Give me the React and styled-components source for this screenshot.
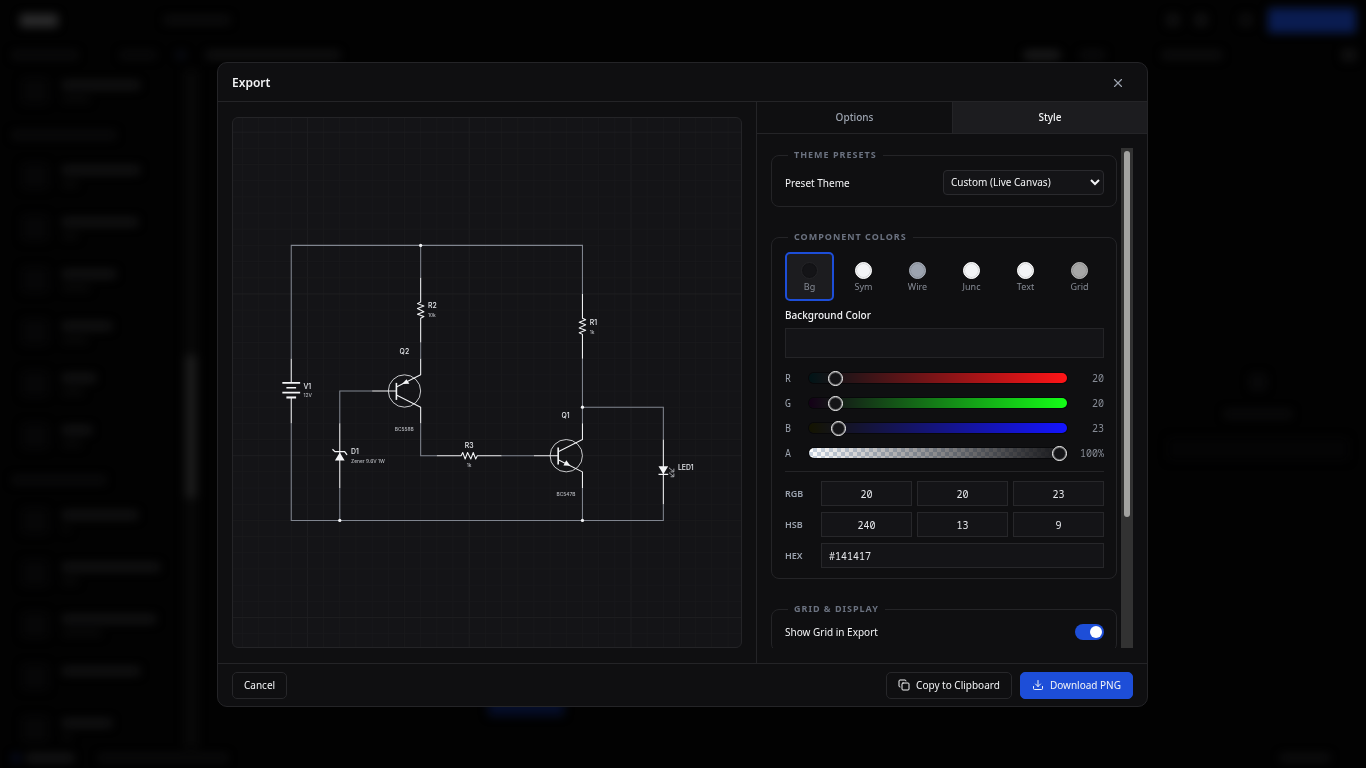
import React, { useState } from "react";
import styled, { createGlobalStyle, css } from "styled-components";
import { X, Copy, Download } from "lucide-react";

const Global = createGlobalStyle`
  *, *::before, *::after { box-sizing: border-box; }
  html, body, #root { height: 100%; }
  body {
    margin: 0;
    background: #020202;
    color: #f3f4f6;
    font: 10px/16px "Noto Sans", "Open Sans", sans-serif;
    overflow: hidden;
  }
  button, input, select { font: inherit; color: inherit; margin: 0; }
`;

const mono = css`font-family: "Noto Sans Mono", "DejaVu Sans Mono", monospace;`;

/* ---------- dimmed workspace behind the dialog ---------- */
const Workspace = styled.div`
  height: 100vh;
  display: flex;
  flex-direction: column;
  filter: blur(5px);
  overflow: hidden;
`;
const WorkRow = styled.div`
  display: flex;
  align-items: center;
  gap: ${(p) => p.$gap || 16}px;
  height: ${(p) => p.$h}px;
  padding: 0 10px 0 ${(p) => p.$left || 10}px;
  flex: none;
`;
const Spacer = styled.div`flex: 1;`;
const Smudge = styled.div`
  flex: none;
  width: ${(p) => p.$w}px;
  height: ${(p) => p.$h || 8}px;
  border-radius: 3px;
  background: ${(p) => p.$c || "#111112"};
`;
const WorkBody = styled.div`
  flex: 1;
  min-height: 0;
  display: flex;
  justify-content: space-between;
`;
const Library = styled.div`
  width: 184px;
  margin-top: -5px;
  overflow: hidden;
`;
const LibraryItem = styled.div`
  display: flex;
  align-items: center;
  gap: 14px;
  height: 52px;
  padding-left: 22px;
`;
const LibraryHead = styled.div`
  height: 33px;
  padding: 14px 12px 0;
`;
const LibraryText = styled.div`
  display: flex;
  flex-direction: column;
  gap: 7px;
`;
const LibraryScroll = styled.div`
  width: 14px;
  background: #080808;
  padding: 285px 2px 0;
`;
const CanvasArea = styled.div`
  flex: 1;
  display: flex;
  align-items: flex-end;
  padding: 0 0 32px 290px;
`;
const Inspector = styled.div`
  width: 216px;
  display: flex;
  flex-direction: column;
  align-items: center;
  justify-content: center;
  gap: 20px;
  padding-top: 16px;
`;

/* ---------- dialog ---------- */
const Overlay = styled.div`
  position: fixed;
  inset: 0;
  display: grid;
  place-items: center;
`;
const Dialog = styled.section`
  width: min(931px, calc(100vw - 32px));
  height: calc(100vh - 123px);
  margin: 1px 1px 0 0;
  display: flex;
  flex-direction: column;
  background: #0f0f11;
  border: 1px solid #242427;
  border-radius: 10px;
  overflow: hidden;
`;
const Header = styled.header`
  display: flex;
  align-items: center;
  justify-content: space-between;
  height: 39px;
  flex: none;
  padding: 1px 19px 0 14px;
  border-bottom: 1px solid #242427;
`;
const Title = styled.h2`
  margin: 0;
  font-size: 12px;
  font-weight: 600;
`;
const IconButton = styled.button`
  display: grid;
  place-items: center;
  width: 20px;
  height: 20px;
  padding: 0;
  border: 0;
  background: none;
  color: #9ca3af;
`;
const Body = styled.div`
  flex: 1;
  min-height: 0;
  display: grid;
  grid-template-columns: minmax(0, 1fr) 391px;
`;
const PreviewPane = styled.div`
  padding: 15px 14px;
  min-height: 0;
  display: flex;
`;
const Preview = styled.div`
  flex: 1;
  min-width: 0;
  border: 1px solid #242427;
  border-radius: 6px;
  background: #141417;
  overflow: hidden;
`;
const Side = styled.aside`
  min-height: 0;
  display: flex;
  flex-direction: column;
  border-left: 1px solid #242427;
`;
const Tabs = styled.div`
  display: grid;
  grid-template-columns: 1fr 1fr;
  height: 32px;
  flex: none;
  border-bottom: 1px solid #242427;
`;
const Tab = styled.button`
  border: 0;
  padding: 0 0 1px;
  font-weight: 500;
  background: ${(p) => (p.$active ? "#1c1c1f" : "transparent")};
  color: ${(p) => (p.$active ? "#f3f4f6" : "#9ca3af")};
  & + & { border-left: 1px solid #242427; }
`;
const ScrollArea = styled.div`
  flex: 1;
  min-height: 0;
  display: flex;
  gap: 4px;
  padding: 14px 14px 15px;
`;
const Settings = styled.div`
  flex: 1;
  min-width: 0;
  overflow-y: auto;
  scrollbar-width: none;
`;
const ScrollTrack = styled.div`
  width: 12px;
  padding: 3px;
  background: #323232;
`;
const ScrollThumb = styled.div`
  height: 74%;
  border-radius: 3px;
  background: #a3a3a1;
`;
const Group = styled.fieldset`
  min-width: 0;
  margin: 0 0 23px;
  padding: 8px 12px 11px 13px;
  border: 1px solid #242427;
  border-radius: 8px;
`;
const Legend = styled.legend`
  margin-left: 3px;
  padding: 0 6px;
  font-size: 9px;
  line-height: 14px;
  font-weight: 700;
  letter-spacing: 1px;
  text-transform: uppercase;
  color: #6b7280;
`;
const SettingRow = styled.div`
  display: flex;
  align-items: center;
  justify-content: space-between;
`;
const Select = styled.select`
  width: 161px;
  height: 25px;
  padding: 0 3px 1px;
  border: 1px solid #2a2a2e;
  border-radius: 4px;
  background: #141417;
`;
const Swatches = styled.div`
  display: grid;
  grid-template-columns: repeat(6, 1fr);
  gap: 5px;
`;
const SwatchButton = styled.button`
  display: flex;
  flex-direction: column;
  align-items: center;
  gap: 1px;
  height: 49px;
  padding: 8px 0 0;
  border: 2px solid ${(p) => (p.$active ? "#1d4ed8" : "transparent")};
  border-radius: 5px;
  background: ${(p) => (p.$active ? "#1c1c1f" : "transparent")};
  color: #868b95;
  font-size: 9px;
  line-height: 14px;
`;
const Dot = styled.span`
  width: 17px;
  height: 17px;
  flex: none;
  border-radius: 50%;
  border: 1px solid ${(p) => p.$edge};
  background: ${(p) => p.$color};
  box-shadow: inset 0 0 0 1px rgba(0, 0, 0, 0.12);
`;
const ColorTitle = styled.h3`
  margin: 6px 0 5px;
  font-size: 10px;
  line-height: 16px;
  font-weight: 500;
`;
const ColorWell = styled.div`
  height: 30px;
  border: 1px solid #242427;
  background: #141417;
`;
const Channels = styled.div`
  display: grid;
  gap: 9px;
  padding: 12px 0 10px;
  margin-bottom: 9px;
  border-bottom: 1px solid #242427;
`;
const Channel = styled.div`
  display: grid;
  grid-template-columns: 24px 1fr 37px;
  align-items: center;
  ${mono}
  line-height: 16px;
  color: #9ca3af;
  output { text-align: right; color: #858a94; }
`;
const Slider = styled.input`
  appearance: none;
  width: 100%;
  height: 10px;
  border-radius: 5px;
  background: ${(p) => p.$track};
  box-shadow: 0 0 0 1px #08080a;
  &::-webkit-slider-thumb {
    appearance: none;
    width: 15px;
    height: 15px;
    border-radius: 50%;
    border: 1px solid #fff;
    background: #141417;
    box-shadow: inset 0 0 0 1px rgba(255, 255, 255, 0.35);
  }
`;
const Values = styled.div`
  display: grid;
  gap: 6px;
  margin-bottom: -1px;
`;
const ValueRow = styled.div`
  display: grid;
  grid-template-columns: 31px ${(p) => (p.$single ? "1fr" : "repeat(3, 1fr)")};
  gap: 5px;
  align-items: center;
  color: #9ca3af;
  font-size: 9px;
  font-weight: 600;
`;
const Field = styled.input`
  min-width: 0;
  height: 25px;
  padding: 0 7px;
  border: 1px solid #27272a;
  background: #141417;
  ${mono}
  font-size: 10px;
  font-weight: 400;
  color: #e5e7eb;
  text-align: ${(p) => p.$align || "center"};
`;
const Switch = styled.input`
  appearance: none;
  display: flex;
  width: 29px;
  height: 16px;
  padding: 2px;
  border-radius: 8px;
  background: #3f3f46;
  &::before {
    content: "";
    width: 12px;
    height: 12px;
    border-radius: 50%;
    background: #fff;
  }
  &:checked { background: #1d4ed8; justify-content: flex-end; }
`;
const Footer = styled.footer`
  display: flex;
  align-items: center;
  gap: 8px;
  height: 43px;
  flex: none;
  padding: 0 14px;
  border-top: 1px solid #242427;
`;
const Button = styled.button`
  display: flex;
  align-items: center;
  gap: 6px;
  height: 27px;
  padding: 0 11px;
  border: 1px solid ${(p) => (p.$primary ? "#1d4ed8" : "#27272a")};
  border-radius: 5px;
  background: ${(p) => (p.$primary ? "#1d4ed8" : "transparent")};
`;

/* ---------- schematic ---------- */
const Drawing = styled.svg`
  display: block;
  width: 100%;
  height: 100%;
  font-family: Inter, sans-serif;
`;

const range = (from, to) => Array.from({ length: to - from + 1 }, (_, i) => from + i);

function Schematic() {
  return (
    <Drawing viewBox="-92 -17.5 628 654" preserveAspectRatio="xMidYMid slice" role="img" aria-label="Circuit preview">
      {range(-5, 27).map((i) => (
        <path key={"v" + i} d={`M${i * 20} -40V660`} stroke={i % 10 ? "#1a1a1d" : "#202023"} />
      ))}
      {range(-1, 32).map((i) => (
        <path key={"h" + i} d={`M-110 ${i * 20}H560`} stroke={i % 10 ? "#1a1a1d" : "#202023"} />
      ))}
      <g fill="none" stroke="#80858f" strokeWidth="1.3">
        <path d="M-20 280V140H340V200M140 140V180M140 260V280M80 320H40V360M140 360V400H160M240 400H280M340 280V360M340 340H440V380M440 460V480H-20V360M40 440V480M340 440V480" />
      </g>
      <g fill="none" stroke="#f3f4f6" strokeWidth="1.3" strokeLinejoin="round">
        <path d="M-20 280V310M-20 328V360" />
        <path d="M-31 310H-9M-26 316H-14M-31 322H-9" strokeWidth="2" />
        <path d="M-26 328H-14" strokeWidth="2.6" />
        <path d="M140 180V210L136 212L144 215L136 218L144 222L136 225L144 228L140 230V260" />
        <path d="M340 200V230L344 232L336 235L344 238L336 242L344 245L336 248L340 250V280" />
        <path d="M160 400H190L192 396L195 404L198 396L202 404L205 396L208 404L210 400H240" />
        <path d="M80 320H110M110 315L140 300V280M110 325L140 340V360" />
        <path d="M110 310V331" strokeWidth="2" />
        <path d="M280 400H310M310 395L340 380V360M310 405L340 420V440" />
        <path d="M310 390V411" strokeWidth="2" />
        <circle cx="120" cy="320" r="20" strokeWidth="1" />
        <circle cx="320" cy="400" r="20" strokeWidth="1" />
        <path d="M40 360V440M440 380V460" />
        <path d="M31 392L34 395H46L49 399M434 423H446" strokeWidth="1.6" />
        <path d="M447 415L453 420M453 420V416M453 420H449M447 421L453 426M453 426V422M453 426H449" strokeWidth="1.2" stroke="#a4a5aa" />
      </g>
      <g fill="#f3f4f6">
        <path d="M117 311.5L122.500 305.500L126 311ZM40 396L46 406H34ZM440 423L434 413H446Z" />
        <path d="M325 412.500L316.500 412L320 405.500Z" />
        <circle cx="140" cy="140" r="2" />
        <circle cx="40" cy="480" r="2" />
        <circle cx="340" cy="480" r="2" />
        <circle cx="340" cy="340" r="2" />
      </g>
      <g fill="#e5e7eb" fontSize="8.5" fontWeight="500">
        <text x="-5" y="318">V1</text>
        <text x="149" y="218">R2</text>
        <text x="349" y="238">R1</text>
        <text x="114" y="274">Q2</text>
        <text x="314" y="354">Q1</text>
        <text x="54" y="398">D1</text>
        <text x="200" y="390" textAnchor="middle">R3</text>
        <text x="458" y="418">LED1</text>
      </g>
      <g fill="#b4b6bb" fontSize="6" fontWeight="500">
        <text x="-5" y="328">12V</text>
        <text x="149" y="229">10k</text>
        <text x="349" y="249">1k</text>
        <text x="108" y="370">BC558B</text>
        <text x="308" y="450">BC547B</text>
        <text x="54" y="409">Zener 9.6V 1W</text>
        <text x="200" y="414" textAnchor="middle">1k</text>
      </g>
    </Drawing>
  );
}

const swatches = [
  ["Bg", "#141417", "#242427"],
  ["Sym", "#f3f4f6", "#ffffff"],
  ["Wire", "#9ca3af", "#a8aeb9"],
  ["Junc", "#f3f4f6", "#ffffff"],
  ["Text", "#f3f4f6", "#ffffff"],
  ["Grid", "#a6a6a6", "#b5b5b5"],
];
const channels = [
  ["R", 20, 255, "linear-gradient(90deg, rgb(0,20,23), rgb(255,20,23))", "20"],
  ["G", 20, 255, "linear-gradient(90deg, rgb(20,0,23), rgb(20,255,23))", "20"],
  ["B", 23, 255, "linear-gradient(90deg, rgb(20,20,0), rgb(20,20,255))", "23"],
  ["A", 100, 100, "linear-gradient(90deg, rgba(20,20,23,0), #141417), repeating-conic-gradient(#cbd5e1 0 25%, #fff 0 50%) 0 0 / 8px 8px", "100%"],
];

function LibraryEntry({ title, sub }) {
  return (
    <LibraryItem>
      <Smudge $w={26} $h={26} $c="#060607" />
      <LibraryText>
        <Smudge $w={title} $c="#141415" />
        <Smudge $w={sub} $h={6} $c="#090909" />
      </LibraryText>
    </LibraryItem>
  );
}

function Backdrop() {
  return (
    <Workspace aria-hidden="true">
      <WorkRow $h={40} $left={20} $gap={16}>
        <Smudge $w={38} $h={13} $c="#2b2b2c" />
        <Smudge $w={74} $c="transparent" />
        <Smudge $w={66} $c="#0d0d0e" />
        <Spacer />
        <Smudge $w={12} $h={12} />
        <Smudge $w={12} $h={12} />
        <Smudge $w={1} $c="transparent" />
        <Smudge $w={12} $h={12} $c="#0d0d0e" />
        <Smudge $w={88} $h={25} $c="#0a1c50" />
      </WorkRow>
      <WorkRow $h={30} $left={12} $gap={20}>
        <Smudge $w={66} $c="#0b0b0c" />
        <Smudge $w={2} $c="transparent" />
        <Smudge $w={36} $c="#0a0a0b" />
        <Smudge $w={10} $c="#090b14" />
        <Smudge $w={134} $c="#121213" />
        <Spacer />
        <Smudge $w={36} $c="#1e1e1f" />
        <Smudge $w={25} $c="#0c0c0d" />
        <Smudge $w={17} $c="transparent" />
        <Smudge $w={60} $c="#0e0e0f" />
        <Smudge $w={80} $c="transparent" />
        <Smudge $w={14} $h={12} />
      </WorkRow>
      <WorkBody>
        <Library>
          <LibraryEntry title={78} sub={28} />
          <LibraryHead><Smudge $w={104} $c="#0b0b0c" /></LibraryHead>
          {[[78, 16], [76, 16], [54, 28], [50, 26], [34, 22], [30, 20]].map(([t, s], i) => (
            <LibraryEntry key={i} title={t} sub={s} />
          ))}
          <LibraryHead><Smudge $w={94} $c="#0b0b0c" /></LibraryHead>
          {[[76, 8], [98, 16], [94, 40], [78, 0], [50, 10]].map(([t, s], i) => (
            <LibraryEntry key={i} title={t} sub={s} />
          ))}
        </Library>
        <LibraryScroll><Smudge $w={10} $h={143} $c="#1e1e1e" /></LibraryScroll>
        <CanvasArea><Smudge $w={76} $h={26} $c="#050d28" /></CanvasArea>
        <Inspector>
          <Smudge $w={16} $h={16} $c="#09090a" />
          <Smudge $w={68} $c="#0b0b0c" />
          <Smudge $w={180} $h={22} $c="#040405" />
        </Inspector>
      </WorkBody>
      <WorkRow $h={20} $left={12} $gap={6}>
        <Smudge $w={8} $c="#060d26" />
        <Smudge $w={48} $c="#161617" />
        <Smudge $w={12} $c="transparent" />
        <Smudge $w={130} $c="#0b0b0c" />
        <Spacer />
        <Smudge $w={50} $c="#0e0e0f" />
        <Smudge $w={20} $c="transparent" />
      </WorkRow>
    </Workspace>
  );
}

export default function App() {
  const [active, setActive] = useState("Bg");
  return (
    <>
      <Global />
      <Backdrop />
      <Overlay>
        <Dialog role="dialog" aria-labelledby="export-title">
          <Header>
            <Title id="export-title">Export</Title>
            <IconButton aria-label="Close"><X size={14} /></IconButton>
          </Header>
          <Body>
            <PreviewPane>
              <Preview><Schematic /></Preview>
            </PreviewPane>
            <Side>
              <Tabs role="tablist">
                <Tab role="tab" aria-selected="false">Options</Tab>
                <Tab role="tab" aria-selected="true" $active>Style</Tab>
              </Tabs>
              <ScrollArea>
                <Settings>
                  <Group>
                    <Legend>Theme Presets</Legend>
                    <SettingRow>
                      <label htmlFor="preset">Preset Theme</label>
                      <Select id="preset"><option>Custom (Live Canvas)</option></Select>
                    </SettingRow>
                  </Group>
                  <Group>
                    <Legend>Component Colors</Legend>
                    <Swatches>
                      {swatches.map(([name, color, edge]) => (
                        <SwatchButton key={name} $active={active === name} onClick={() => setActive(name)}>
                          <Dot $color={color} $edge={edge} />
                          {name}
                        </SwatchButton>
                      ))}
                    </Swatches>
                    <ColorTitle>Background Color</ColorTitle>
                    <ColorWell />
                    <Channels>
                      {channels.map(([name, value, max, track, text]) => (
                        <Channel key={name}>
                          <label htmlFor={"ch-" + name}>{name}</label>
                          <Slider id={"ch-" + name} type="range" min="0" max={max} defaultValue={value} $track={track} />
                          <output htmlFor={"ch-" + name}>{text}</output>
                        </Channel>
                      ))}
                    </Channels>
                    <Values>
                      <ValueRow>
                        <label htmlFor="rgb-r">RGB</label>
                        <Field id="rgb-r" defaultValue="20" />
                        <Field aria-label="Green" defaultValue="20" />
                        <Field aria-label="Blue" defaultValue="23" />
                      </ValueRow>
                      <ValueRow>
                        <label htmlFor="hsb-h">HSB</label>
                        <Field id="hsb-h" defaultValue="240" />
                        <Field aria-label="Saturation" defaultValue="13" />
                        <Field aria-label="Brightness" defaultValue="9" />
                      </ValueRow>
                      <ValueRow $single>
                        <label htmlFor="hex">HEX</label>
                        <Field id="hex" $align="left" defaultValue="#141417" />
                      </ValueRow>
                    </Values>
                  </Group>
                  <Group>
                    <Legend>Grid &amp; Display</Legend>
                    <SettingRow>
                      <label htmlFor="show-grid">Show Grid in Export</label>
                      <Switch id="show-grid" type="checkbox" defaultChecked />
                    </SettingRow>
                  </Group>
                </Settings>
                <ScrollTrack><ScrollThumb /></ScrollTrack>
              </ScrollArea>
            </Side>
          </Body>
          <Footer>
            <Button>Cancel</Button>
            <Spacer />
            <Button><Copy size={12} />Copy to Clipboard</Button>
            <Button $primary><Download size={12} />Download PNG</Button>
          </Footer>
        </Dialog>
      </Overlay>
    </>
  );
}
